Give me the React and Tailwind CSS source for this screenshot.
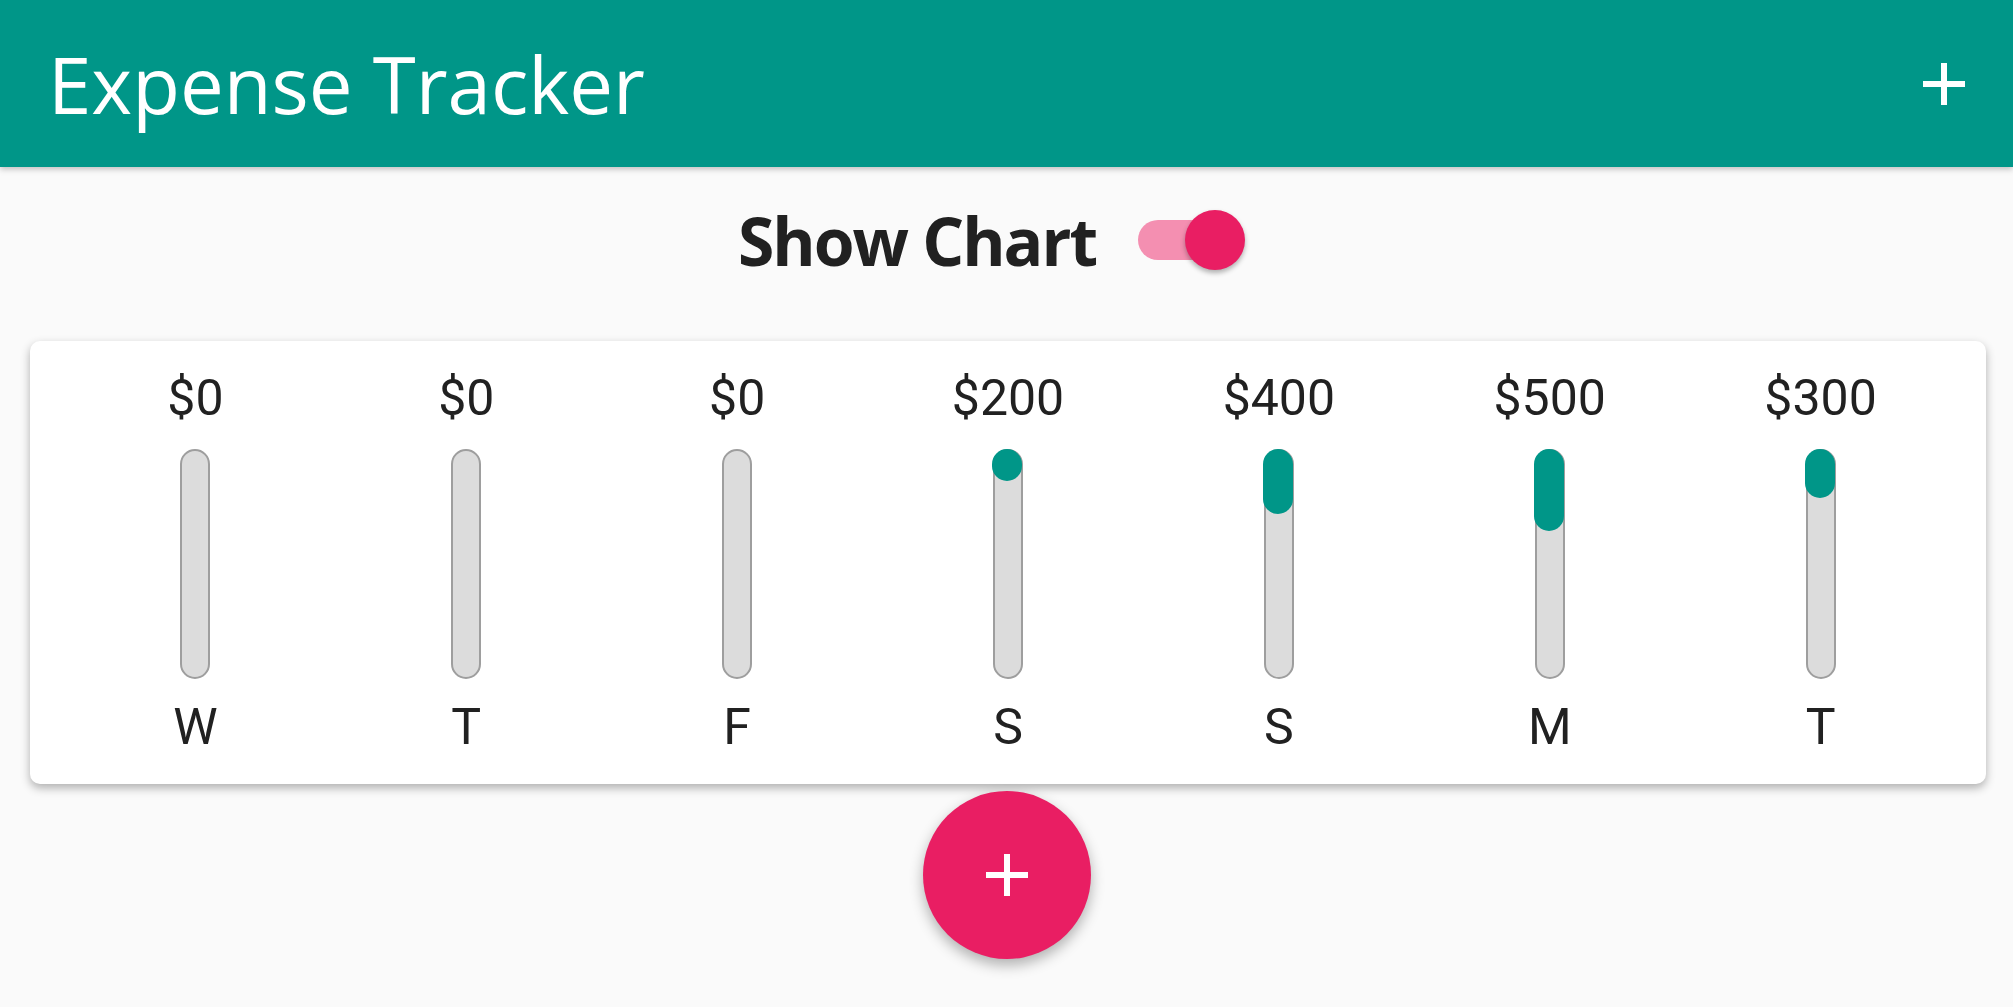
import React from 'react';

const days = [
  { day: 'W', amount: 0 },
  { day: 'T', amount: 0 },
  { day: 'F', amount: 0 },
  { day: 'S', amount: 200 },
  { day: 'S', amount: 400 },
  { day: 'M', amount: 500 },
  { day: 'T', amount: 300 },
];

const total = days.reduce((sum, d) => sum + d.amount, 0);
const BAR_HEIGHT = 230;

const PlusIcon = ({ className }) => (
  <svg viewBox="0 0 42 42" className={className} fill="currentColor">
    <rect x="18" y="0" width="6" height="42" />
    <rect x="0" y="18" width="42" height="6" />
  </svg>
);

const ChartBar = ({ day, amount }) => {
  const fill = total ? (amount / total) * BAR_HEIGHT : 0;
  return (
    <div className="flex flex-col items-center">
      <span className="text-[50px] leading-none h-[50px] text-[#212121]">${amount}</span>
      <div className="relative mt-[26px] w-[30px] h-[230px] rounded-full bg-[#dcdcdc] border-[2.5px] border-[#9e9e9e]">
        {amount > 0 && (
          <div
            className="absolute left-[-2.5px] top-[-2.5px] w-[30px] rounded-full bg-[#009688]"
            style={{ height: `${fill}px` }}
          />
        )}
      </div>
      <span className="mt-[23px] text-[50px] leading-none h-[50px] text-[#212121]">{day}</span>
    </div>
  );
};

export default function App() {
  return (
    <div className="min-h-screen bg-[#fafafa]" style={{ fontFamily: 'Roboto, "Liberation Sans", sans-serif' }}>
      <header className="h-[167px] bg-[#009688] flex items-center justify-between pl-[48px] pr-[48px] shadow-[0_2px_6px_rgba(0,0,0,0.25)]">
        <h1 className="text-white text-[78px] font-normal leading-none" style={{ fontFamily: '"Open Sans", sans-serif' }}>
          Expense Tracker
        </h1>
        <PlusIcon className="w-[42px] h-[42px] text-white" />
      </header>

      <div className="flex justify-center items-center h-[60px] mt-[43px]">
        <span
          className="text-[66px] font-bold text-[#212121] leading-none tracking-[-2px]"
          style={{ fontFamily: '"Open Sans", sans-serif' }}
        >
          Show Chart
        </span>
        <div className="relative ml-[42px] mr-[30px] w-[107px] h-[60px] flex items-center">
          <div className="w-[92px] h-[40px] rounded-full bg-[#f48fb1]" />
          <div className="absolute right-0 top-0 w-[60px] h-[60px] rounded-full bg-[#e91e63] shadow-[0_3px_5px_rgba(0,0,0,0.3)]" />
        </div>
      </div>

      <div className="ml-[30px] mr-[27px] mt-[71px] h-[443px] bg-white rounded-[10px] shadow-[0_4px_10px_rgba(0,0,0,0.3)] px-[30px] pt-[32px] grid grid-cols-7">
        {days.map((d, i) => (
          <ChartBar key={i} day={d.day} amount={d.amount} />
        ))}
      </div>

      <div className="flex justify-center mt-[7px]">
        <button className="w-[168px] h-[168px] rounded-full bg-[#e91e63] flex items-center justify-center shadow-[0_6px_14px_rgba(0,0,0,0.3)]">
          <PlusIcon className="w-[42px] h-[42px] text-white" />
        </button>
      </div>
    </div>
  );
}
